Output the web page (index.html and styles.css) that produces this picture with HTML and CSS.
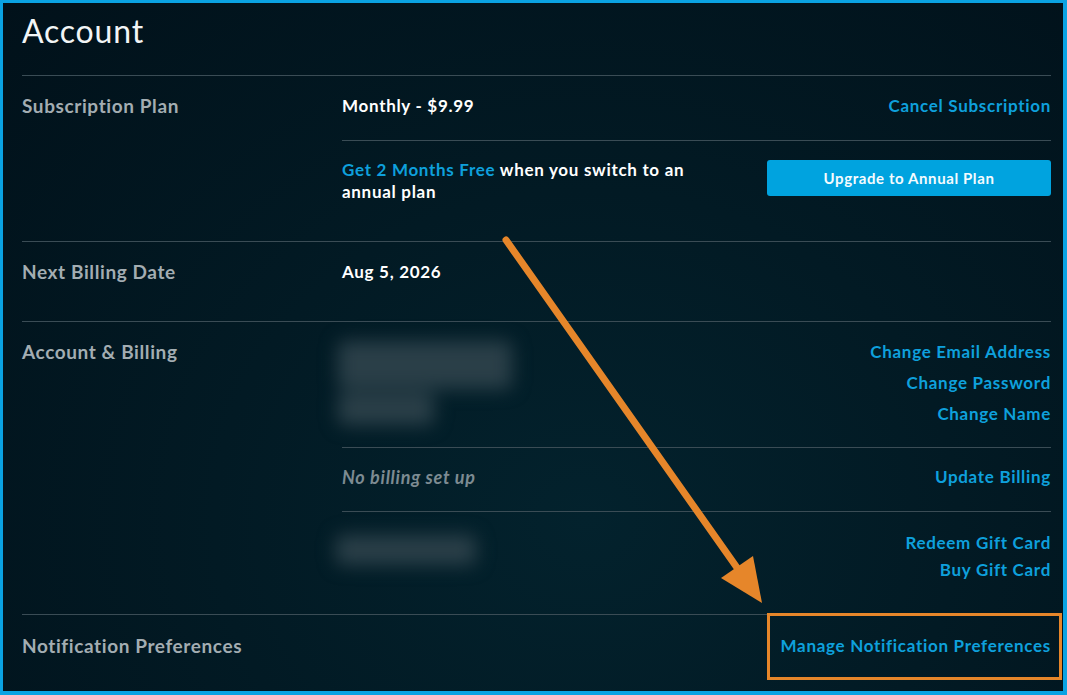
FILE: index.html
```html
<!DOCTYPE html>
<html lang="en">
<head>
<meta charset="UTF-8">
<meta name="viewport" content="width=device-width, initial-scale=1.0">
<title>Account</title>
<link rel="stylesheet" href="styles.css">
</head>
<body>
<div class="shot">
  <div class="frame">
    <h1 class="title">Account</h1>

    <section class="row">
      <div class="label">Subscription Plan</div>
      <div class="body">
        <div class="sub split">
          <span class="value">Monthly - $9.99</span>
          <a class="link" href="#">Cancel Subscription</a>
        </div>
        <div class="sub split top">
          <p class="promo"><span class="hl">Get 2 Months Free</span> when you switch to an annual plan</p>
          <button class="btn">Upgrade to Annual Plan</button>
        </div>
      </div>
    </section>

    <section class="row">
      <div class="label">Next Billing Date</div>
      <div class="body">
        <div class="sub">
          <span class="value">Aug 5, 2026</span>
        </div>
      </div>
    </section>

    <section class="row short">
      <div class="label">Account &amp; Billing</div>
      <div class="body">
        <div class="sub split top tight-bottom">
          <div class="blur blur-email">
            <span class="bar b1"></span>
            <span class="bar b2"></span>
          </div>
          <div class="links">
            <a class="link" href="#">Change Email Address</a>
            <a class="link" href="#">Change Password</a>
            <a class="link" href="#">Change Name</a>
          </div>
        </div>
        <div class="sub split">
          <span class="muted">No billing set up</span>
          <a class="link" href="#">Update Billing</a>
        </div>
        <div class="sub split top gift">
          <div class="blur blur-card"><span class="bar b4"></span></div>
          <div class="links tight">
            <a class="link" href="#">Redeem Gift Card</a>
            <a class="link" href="#">Buy Gift Card</a>
          </div>
        </div>
      </div>
    </section>

    <section class="row last">
      <div class="label">Notification Preferences</div>
      <div class="body">
        <div class="sub split">
          <span></span>
          <a class="link" href="#">Manage Notification Preferences</a>
        </div>
      </div>
    </section>
  </div>

  <!-- annotation drawn over the screenshot -->
  <svg class="annot" width="1067" height="695" viewBox="0 0 1067 695">
    <line x1="506" y1="240" x2="745" y2="579" stroke="#e6862a" stroke-width="7" stroke-linecap="round"/>
    <polygon points="762,603 721,578 753,556" fill="#e6862a"/>
    <rect x="768.5" y="614.5" width="292" height="64" fill="none" stroke="#e6862a" stroke-width="3"/>
  </svg>
</div>
</body>
</html>
```

FILE: styles.css
```css
body {
    margin: 0;
    font-family: 'Lato', 'Noto Sans', sans-serif;
    background: #00a2e2;
}
.shot {
    position: relative;
    width: 1067px;
    height: 695px;
}
.frame {
    box-sizing: border-box;
    width: 1067px;
    height: 695px;
    border: 3px solid #0aa3e3;
    border-right-width: 4px;
    border-bottom-width: 4px;
    padding: 8px 12px 0 19px;
    background: radial-gradient(ellipse at 55% 75%, #03222d 0%, #021a24 45%, #01111a 100%);
    overflow: hidden;
}
.title {
    margin: 0 0 24px;
    font-size: 32px;
    line-height: 40px;
    font-weight: 400;
    letter-spacing: 0.8px;
    color: #f2f5f6;
}
.row {
    display: flex;
    border-top: 1px solid #3a4c55;
    padding-bottom: 15px;
}
.row.short {
    padding-bottom: 10px;
}
.row.last .label,
.row.last .sub {
    padding-top: 20px;
}
.label {
    width: 320px;
    flex: none;
    padding-top: 19px;
    font-size: 19px;
    line-height: 22px;
    font-weight: 700;
    letter-spacing: 0.6px;
    color: #a3adb2;
}
.body {
    flex: 1;
}
.sub {
    padding: 19px 0 23px;
    font-size: 17px;
    line-height: 22px;
    letter-spacing: 0.7px;
}
.sub.tight-bottom {
    padding-bottom: 22px;
}
.sub + .sub {
    border-top: 1px solid #3a4c55;
    padding-top: 18px;
}
.sub + .sub.gift {
    padding-top: 20px;
}
.split {
    display: flex;
    justify-content: space-between;
    align-items: center;
}
.split.top {
    align-items: flex-start;
}
.value {
    font-weight: 700;
    color: #ffffff;
}
.muted {
    font-size: 18px;
    font-style: italic;
    font-weight: 700;
    color: #7d8b92;
}
.link {
    color: #0ea0dc;
    font-weight: 700;
    text-decoration: none;
}
.links {
    display: flex;
    flex-direction: column;
    align-items: flex-end;
    gap: 9px;
}
.links.tight {
    gap: 5px;
}
.promo {
    margin: 0;
    width: 370px;
    font-weight: 700;
    color: #ffffff;
}
.hl {
    color: #0ea0dc;
}
.btn {
    margin-top: 1px;
    width: 284px;
    height: 36px;
    border: none;
    border-radius: 3px;
    background: #00a3df;
    color: #f4fbfe;
    font-family: inherit;
    font-size: 15px;
    font-weight: 700;
    letter-spacing: 0.6px;
    cursor: pointer;
}
.blur {
    display: flex;
    flex-direction: column;
    gap: 4px;
    margin-left: -4px;
    filter: blur(9px);
}
.bar {
    display: block;
    background: #2a3f48;
    border-radius: 6px;
}
.b1 { width: 174px; height: 48px; }
.b2 { width: 96px; height: 32px; }
.blur-card {
    margin-left: -6px;
    padding-top: 3px;
}
.b4 { width: 140px; height: 30px; }
.annot {
    position: absolute;
    left: 0;
    top: 0;
    pointer-events: none;
}
```
